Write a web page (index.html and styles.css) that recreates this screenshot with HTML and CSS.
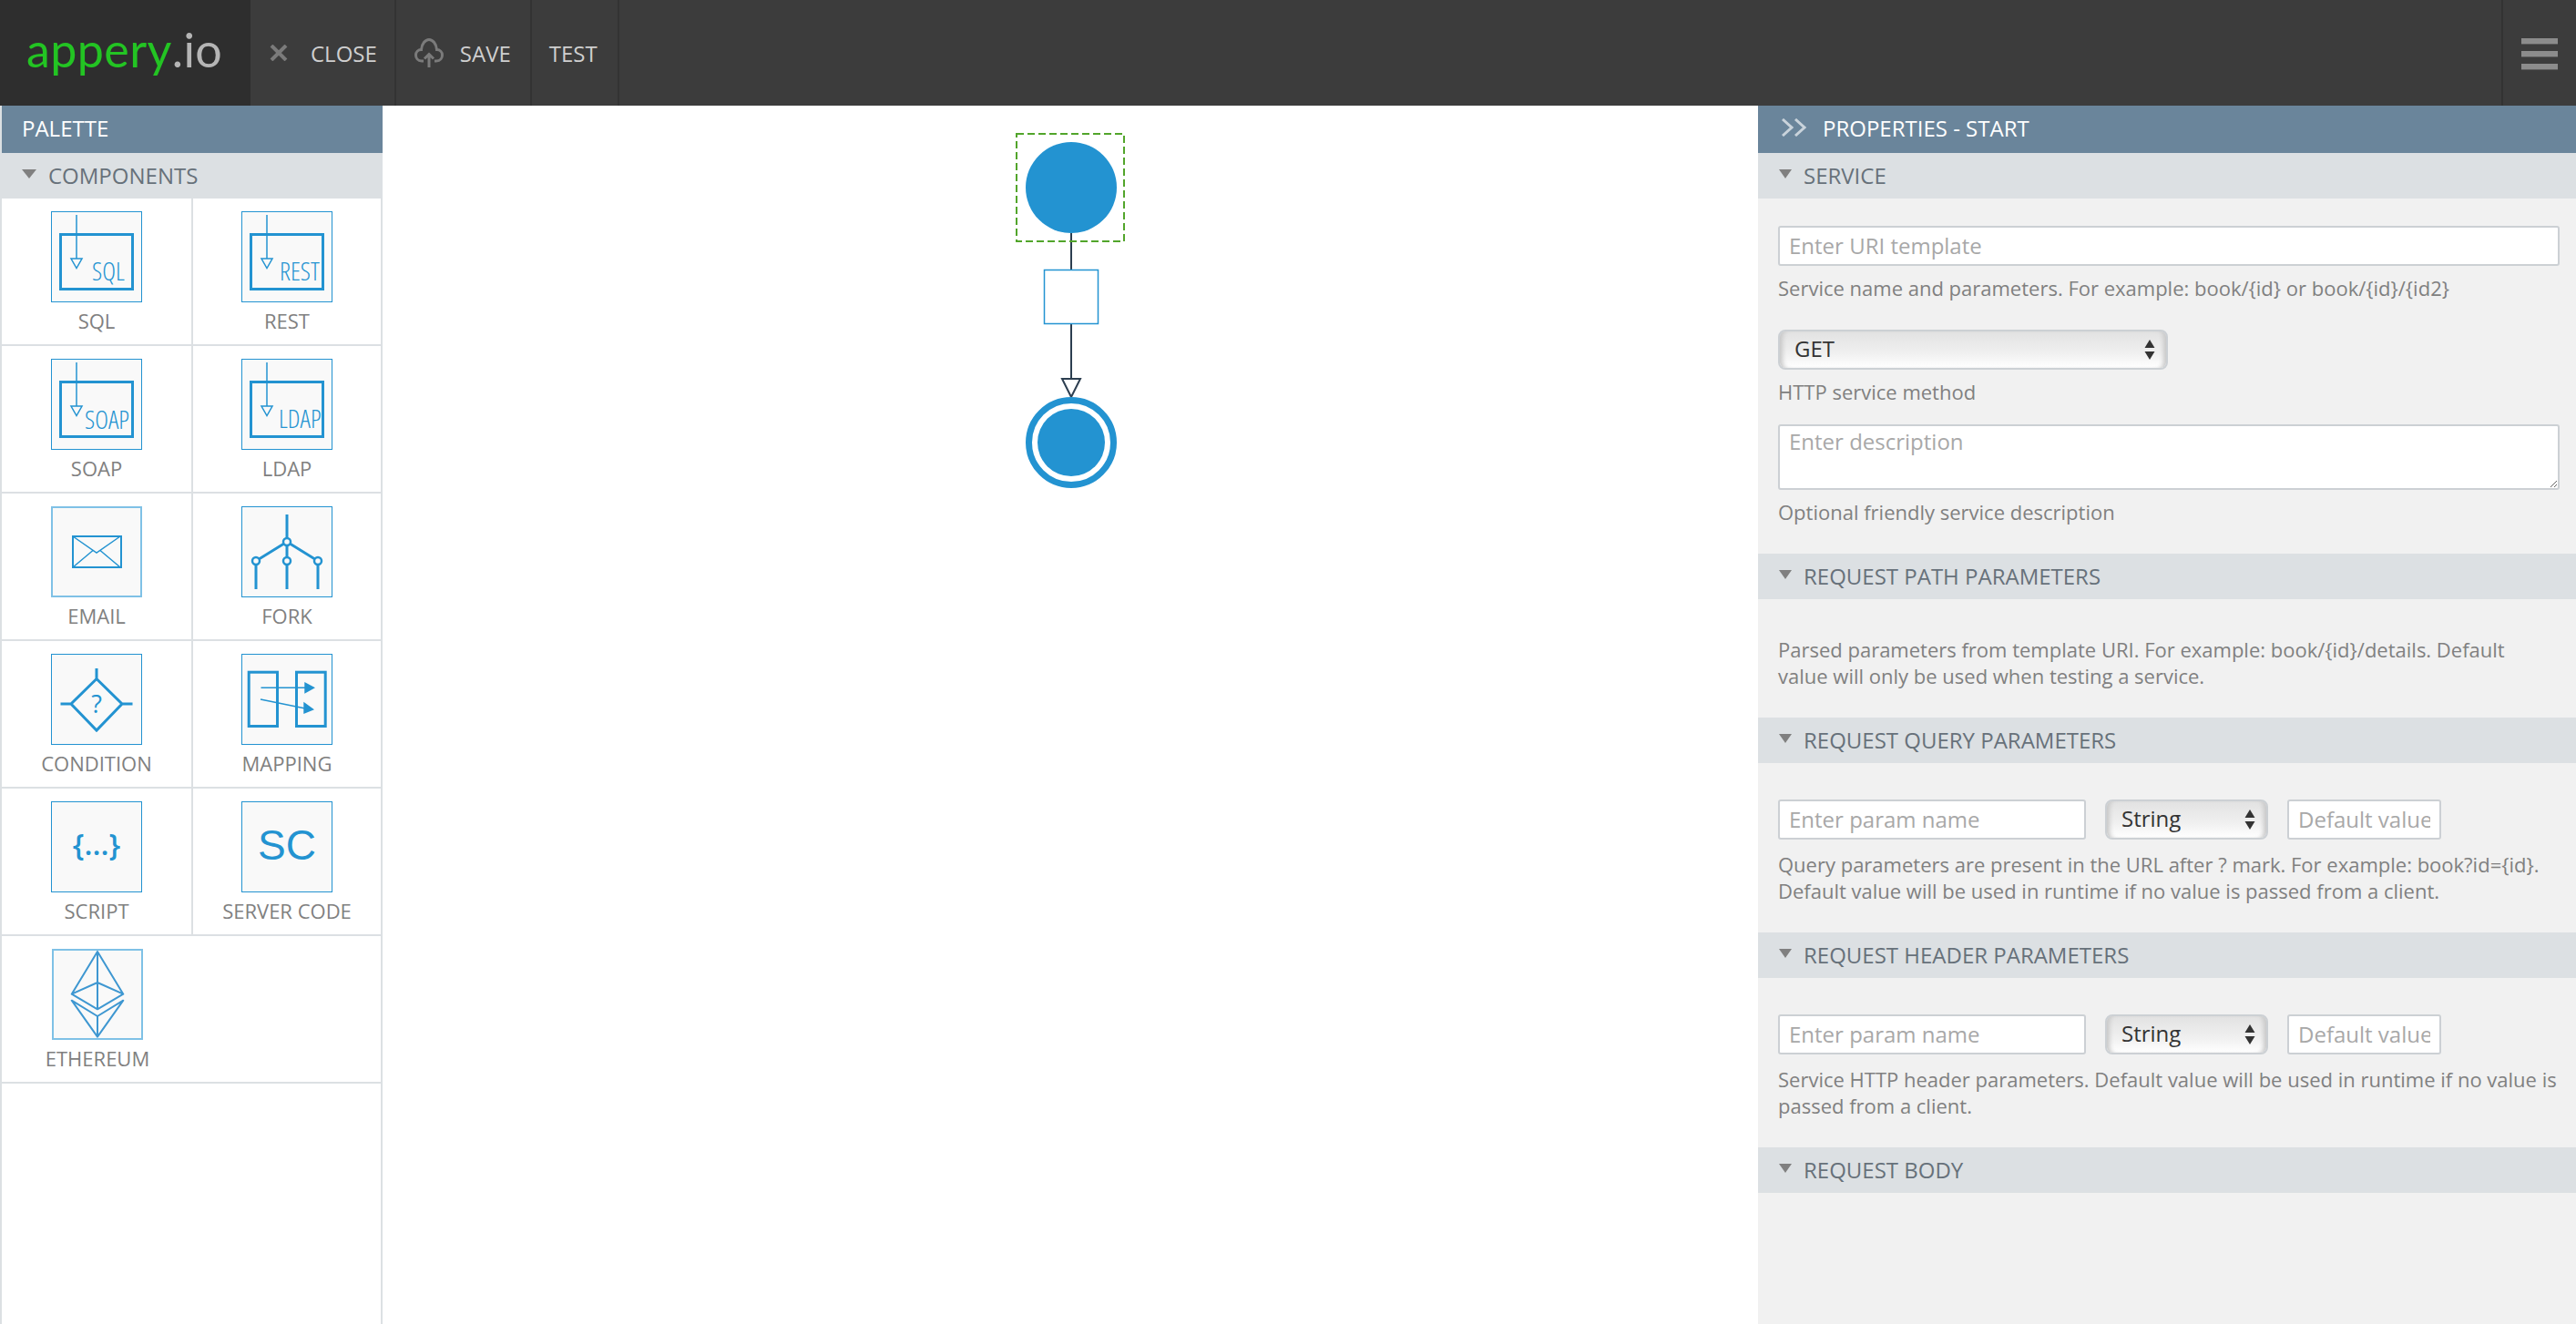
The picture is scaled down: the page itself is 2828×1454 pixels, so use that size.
FILE: index.html
```html
<!DOCTYPE html>
<html lang="en">
<head>
<meta charset="utf-8">
<title>Appery.io service editor</title>
<link rel="stylesheet" href="styles.css">
</head>
<body>
<header class="topbar">
  <div class="logo"><span class="logo-green">appery</span><span class="logo-grey">.io</span></div>
  <div class="tool tool-close">
    <svg class="tool-x" width="20" height="18" viewBox="0 0 20 18"><path d="M2 1 L18 17 M18 1 L2 17"/></svg>
    <span>CLOSE</span>
  </div>
  <div class="tool tool-save">
    <svg class="tool-cloud" width="32" height="32" viewBox="0 0 32 32"><path d="M10 25 H8 C3.500 25 1.500 21.500 1.500 18.500 C1.500 15 4 12.500 7.500 12.500 C8 6 12 1.500 16 1.500 C20 1.500 24 6 24.500 12.500 C28 12.500 30.500 15 30.500 18.500 C30.500 21.500 28.500 25 24 25 H22"/><path d="M16 32 V18 M11 22.500 L16 17.500 L21 22.500"/></svg>
    <span>SAVE</span>
  </div>
  <div class="tool tool-test"><span>TEST</span></div>
  <div class="top-spacer"></div>
  <div class="menu"><span class="bar"></span><span class="bar"></span><span class="bar"></span></div>
</header>

<main class="workspace">
  <aside class="palette">
    <div class="panel-title palette-title">PALETTE</div>
    <div class="section-head"><i class="caret"></i>COMPONENTS</div>
    <div class="grid">
      <div class="cell">
        <svg class="icon" viewBox="0 0 98 98"><g transform="translate(-1 -1)"><rect class="s3" x="10.500" y="25.500" width="79" height="60"/><path class="s15" d="M28 4 V52"/><path class="s15 bgf" d="M22 52 H34 L28 62.500 Z"/><text class="ico-cond" x="45" y="76">SQL</text></g></svg>
        <div class="label">SQL</div>
      </div>
      <div class="cell">
        <svg class="icon" viewBox="0 0 98 98"><g transform="translate(-1 -1)"><rect class="s3" x="10.500" y="25.500" width="79" height="60"/><path class="s15" d="M28 4 V52"/><path class="s15 bgf" d="M22 52 H34 L28 62.500 Z"/><text class="ico-cond" x="42" y="76">REST</text></g></svg>
        <div class="label">REST</div>
      </div>
      <div class="cell">
        <svg class="icon" viewBox="0 0 98 98"><g transform="translate(-1 -1)"><rect class="s3" x="10.500" y="25.500" width="79" height="60"/><path class="s15" d="M28 4 V52"/><path class="s15 bgf" d="M22 52 H34 L28 62.500 Z"/><text class="ico-cond" x="37" y="77">SOAP</text></g></svg>
        <div class="label">SOAP</div>
      </div>
      <div class="cell">
        <svg class="icon" viewBox="0 0 98 98"><g transform="translate(-1 -1)"><rect class="s3" x="10.500" y="25.500" width="79" height="60"/><path class="s15" d="M28 4 V52"/><path class="s15 bgf" d="M22 52 H34 L28 62.500 Z"/><text class="ico-cond" x="41" y="76">LDAP</text></g></svg>
        <div class="label">LDAP</div>
      </div>
      <div class="cell">
        <svg class="icon icon-soft" viewBox="0 0 96 96"><g transform="translate(-2 -2)"><rect class="s2" x="24" y="33" width="53" height="34"/><path class="s15" d="M24 33 L50 51 L76 33 M24 67 L46 48.500 M54 48.500 L76 67"/></g></svg>
        <div class="label">EMAIL</div>
      </div>
      <div class="cell">
        <svg class="icon" viewBox="0 0 98 98"><g transform="translate(-1 -1)"><path class="s3" d="M50 9 V91 M50 39 L16 60 V91 M50 39 L84 60 V91"/><circle class="s25 bgf" cx="50" cy="39" r="4"/><circle class="s25 bgf" cx="50" cy="60" r="4"/><circle class="s25 bgf" cx="16" cy="60" r="4"/><circle class="s25 bgf" cx="84" cy="60" r="4"/></g></svg>
        <div class="label">FORK</div>
      </div>
      <div class="cell">
        <svg class="icon" viewBox="0 0 98 98"><g transform="translate(-1 -1)"><path class="s3" d="M50 16 V27.500 M10.500 55 H22 M78 55 H89.500 M50 27.500 L78 55 L50 84 L22 55 Z"/><text class="ico-q" x="50" y="65">?</text></g></svg>
        <div class="label">CONDITION</div>
      </div>
      <div class="cell">
        <svg class="icon" viewBox="0 0 98 98"><g transform="translate(-1 -1)"><rect class="s3" x="8.200" y="20.200" width="31.300" height="59.300"/><rect class="s3" x="60.500" y="20.200" width="31.700" height="59.300"/><path class="s15" d="M21.500 37.300 H70 M21 50 L70 60"/><path class="f" d="M69.300 31 L81 37.300 L69.300 43.700 Z M68.300 52.700 L80 61.300 L68.300 66 Z"/></g></svg>
        <div class="label">MAPPING</div>
      </div>
      <div class="cell">
        <svg class="icon" viewBox="0 0 98 98"><text class="ico-braces" x="49" y="58">{...}</text></svg>
        <div class="label">SCRIPT</div>
      </div>
      <div class="cell">
        <svg class="icon" viewBox="0 0 98 98"><text class="ico-sc" x="49" y="63">SC</text></svg>
        <div class="label">SERVER CODE</div>
      </div>
      <div class="cell cell-last">
        <svg class="icon icon-soft" viewBox="0 0 96 96"><g transform="translate(-2 -2)"><path class="eth" d="M50 3 L78.300 49.700 L50 66.300 L21.700 49.700 Z M21.700 49.700 L50 37 L78.300 49.700 M50 3 V66.300 M21.700 56.700 L50 74 L78.300 56.700 L50 96.700 Z M50 74 V96.700"/></g></svg>
        <div class="label">ETHEREUM</div>
      </div>
    </div>
  </aside>

  <section class="canvas">
    <svg class="diagram" width="1510" height="1338" viewBox="420 116 1510 1338">
      <path class="edge" d="M1176 256 V296 M1176 356 V416"/>
      <path class="edge edge-arrow" d="M1166 416 H1186 L1176 436 Z"/>
      <rect class="select-box" x="1116" y="147" width="118" height="118"/>
      <circle class="node" cx="1176" cy="206" r="50"/>
      <rect class="task" x="1146.500" y="296.500" width="59" height="59"/>
      <circle class="node-ring" cx="1176" cy="486" r="46.500"/>
      <circle class="node" cx="1176" cy="486" r="37"/>
    </svg>
  </section>

  <aside class="props">
    <div class="panel-title props-title">
      <svg class="chev" width="28" height="20" viewBox="0 0 28 20"><path d="M1 1 L11 10 L1 19 M15 1 L25 10 L15 19"/></svg>
      PROPERTIES - START
    </div>

    <div class="section-head"><i class="caret"></i>SERVICE</div>
    <div class="body body-service">
      <input class="field field-full" type="text" placeholder="Enter URI template">
      <p class="hint">Service name and parameters. For example: book/{id} or book/{id}/{id2}</p>
      <div class="select select-method"><span>GET</span><svg class="updown" width="12" height="22" viewBox="0 0 12 22"><path d="M6 0 L11.500 9 H0.500 Z M0.500 13 H11.500 L6 22 Z"/></svg></div>
      <p class="hint">HTTP service method</p>
      <textarea class="field field-area" placeholder="Enter description"></textarea>
      <p class="hint">Optional friendly service description</p>
    </div>

    <div class="section-head"><i class="caret"></i>REQUEST PATH PARAMETERS</div>
    <div class="body body-path">
      <p class="hint hint-flush">Parsed parameters from template URI. For example: book/{id}/details. Default value will only be used when testing a service.</p>
    </div>

    <div class="section-head"><i class="caret"></i>REQUEST QUERY PARAMETERS</div>
    <div class="body body-params">
      <div class="param-row">
        <input class="field field-name" type="text" placeholder="Enter param name">
        <div class="select select-type"><span>String</span><svg class="updown" width="12" height="22" viewBox="0 0 12 22"><path d="M6 0 L11.500 9 H0.500 Z M0.500 13 H11.500 L6 22 Z"/></svg></div>
        <input class="field field-default" type="text" placeholder="Default value">
      </div>
      <p class="hint hint-row">Query parameters are present in the URL after ? mark. For example: book?id={id}. Default value will be used in runtime if no value is passed from a client.</p>
    </div>

    <div class="section-head"><i class="caret"></i>REQUEST HEADER PARAMETERS</div>
    <div class="body body-params">
      <div class="param-row">
        <input class="field field-name" type="text" placeholder="Enter param name">
        <div class="select select-type"><span>String</span><svg class="updown" width="12" height="22" viewBox="0 0 12 22"><path d="M6 0 L11.500 9 H0.500 Z M0.500 13 H11.500 L6 22 Z"/></svg></div>
        <input class="field field-default" type="text" placeholder="Default value">
      </div>
      <p class="hint hint-row">Service HTTP header parameters. Default value will be used in runtime if no value is passed from a client.</p>
    </div>

    <div class="section-head"><i class="caret"></i>REQUEST BODY</div>
  </aside>
</main>
</body>
</html>
```
FILE: styles.css
```css
* { box-sizing: border-box; }
html, body { margin: 0; height: 100%; }
body {
  display: flex;
  flex-direction: column;
  height: 100vh;
  overflow: hidden;
  background: #fff;
  font-family: "Open Sans", "Liberation Sans", sans-serif;
  font-size: 22px;
  color: #808080;
}

/* top bar */
.topbar {
  display: flex;
  flex: 0 0 116px;
  align-items: stretch;
  background: #3c3c3c;
  color: #cfcfcf;
  font-size: 24px;
}
.logo {
  display: flex;
  flex: 0 0 275px;
  align-items: center;
  padding: 0 0 8px 29px;
  background: #2e2e2e;
  font-family: Lato, sans-serif;
  font-weight: 400;
  font-size: 52px;
  letter-spacing: 0.4px;
  line-height: 1;
  white-space: nowrap;
}
.logo-green { color: #23c423; }
.logo-grey { color: #b5b5b5; }
.tool {
  display: flex;
  align-items: center;
  border-right: 2px solid #333;
  white-space: nowrap;
}
.tool-close { gap: 25px; padding: 0 19px 0 21px; }
.tool-save { gap: 18px; padding: 0 21px 0 20px; }
.tool-test { padding: 0 22px 0 19px; }
.tool-x path { fill: none; stroke: #7b7b7b; stroke-width: 4; }
.tool-cloud path { fill: none; stroke: #7b7b7b; stroke-width: 3; }
.top-spacer { flex: 1; }
.menu {
  display: flex;
  flex: 0 0 82px;
  flex-direction: column;
  gap: 8px;
  padding: 42px 20px 0;
  border-left: 2px solid #333;
}
.bar {
  display: block;
  width: 40px;
  height: 6px;
  background: #8c8c8c;
  box-shadow: 0 1px 0 #5c5c5c;
}

/* columns */
.workspace { display: flex; flex: 1; min-height: 0; }
.palette {
  flex: 0 0 420px;
  display: flex;
  flex-direction: column;
  border-left: 2px solid #dce0e3;
  border-right: 2px solid #dce0e3;
}
.canvas { flex: 1; min-width: 0; background: #fff; }
.diagram { display: block; }
.props { flex: 0 0 898px; background: #f1f1f1; }

.panel-title {
  display: flex;
  flex: 0 0 52px;
  align-items: center;
  height: 52px;
  padding-bottom: 4px;
  background: #6a859b;
  color: #fff;
  font-size: 24px;
}
.palette-title { margin-right: -2px; padding-left: 22px; }
.props-title { gap: 17px; padding-left: 26px; }
.chev path { fill: none; stroke: #c9d3db; stroke-width: 3; }

.section-head {
  display: flex;
  flex: 0 0 50px;
  align-items: center;
  height: 50px;
  padding-bottom: 2px;
  background: #dce0e3;
  color: #67717a;
  font-size: 24px;
}
.palette .section-head { margin-right: -2px; padding-left: 22px; }
.props .section-head { padding-left: 23px; }
.caret {
  flex: 0 0 auto;
  width: 0;
  height: 0;
  margin: -3px 13px 0 0;
  border-left: 8px solid transparent;
  border-right: 8px solid transparent;
  border-top: 10px solid #808080;
}
.props .caret {
  margin-right: 13px;
  border-left-width: 7px;
  border-right-width: 7px;
}

/* palette grid */
.grid { display: grid; grid-template-columns: 210px 206px; }
.cell {
  display: flex;
  flex-direction: column;
  align-items: center;
  height: 162px;
  padding-top: 14px;
  border-bottom: 2px solid #dce0e3;
}
.cell:nth-child(odd) { border-right: 2px solid #dce0e3; }
.cell-last { grid-column: 1 / -1; padding-right: 206px; }
.cell.cell-last { border-right: 0; }
.label { margin-top: 2px; line-height: 36px; color: #808080; white-space: nowrap; }

.icon {
  display: block;
  flex: 0 0 100px;
  width: 100px;
  height: 100px;
  border: 1px solid #2393d1;
  background: #f9f9f9;
}
.icon-soft { border: 2px solid #7fc1e6; }
.s3, .s2, .s15, .s25, .eth { fill: none; stroke: #2393d1; }
.s3 { stroke-width: 3; }
.s2 { stroke-width: 2; }
.s15 { stroke-width: 1.500; }
.s25 { stroke-width: 2.500; }
.bgf { fill: #f9f9f9; }
.f { fill: #2393d1; }
.eth { stroke: #3e97d1; stroke-width: 2; stroke-linejoin: round; }
.ico-cond {
  font-family: "Open Sans", sans-serif;
  font-size: 28px;
  font-weight: 300;
  font-stretch: 75%;
  fill: #2393d1;
}
.ico-q { font-family: "Open Sans", sans-serif; font-size: 27px; fill: #2393d1; text-anchor: middle; }
.ico-braces {
  font-family: "Open Sans", sans-serif;
  font-size: 33px;
  font-weight: 600;
  fill: #2393d1;
  text-anchor: middle;
}
.ico-sc {
  font-family: "Liberation Sans", sans-serif;
  font-size: 46px;
  fill: #2393d1;
  text-anchor: middle;
}

/* diagram */
.edge { fill: none; stroke: #2c3e50; stroke-width: 2; }
.edge-arrow { fill: #fff; }
.select-box { fill: none; stroke: #52a52b; stroke-width: 2; stroke-dasharray: 8 4; }
.node { fill: #2393d1; }
.node-ring { fill: #fff; stroke: #2393d1; stroke-width: 7; }
.task { fill: #fff; stroke: #2393d1; stroke-width: 1.500; }

/* properties */
.body { padding-left: 22px; padding-right: 18px; }
.body-service { height: 390px; padding-top: 30px; }
.body-path { height: 130px; padding-top: 41px; }
.body-params { height: 186px; padding-top: 40px; }
.hint { margin: 10px 0 0; padding-bottom: 2px; line-height: 29px; color: #808080; }
.hint-flush { margin-top: 0; }
.hint-row { margin-top: 13px; }
.field {
  display: block;
  height: 44px;
  padding: 0 10px 2px;
  border: 2px solid #ccd0d4;
  border-radius: 3px;
  background: #fff;
  color: #555;
  font: inherit;
  font-size: 24px;
  outline: 0;
}
.field::placeholder { color: #a8a8a8; opacity: 1; }
.field-full { width: 858px; }
.field-area { width: 858px; height: 72px; margin-top: 19px; padding: 2px 10px; line-height: 30px; }
.field-name { width: 338px; }
.field-default { width: 169px; }
.param-row { display: flex; gap: 21px; }
.select {
  display: flex;
  align-items: center;
  justify-content: space-between;
  height: 44px;
  padding: 0 12px 4px 16px;
  border: 2px solid #ccd0d4;
  border-radius: 8px;
  background: linear-gradient(#e2e2e2, #f0f0f0 60%, #fff);
  box-shadow: inset 6px 0 5px -3px #c8c8c8, inset -6px 0 5px -3px #c8c8c8;
  color: #333;
  font-size: 24px;
}
.select-method { width: 428px; margin-top: 29px; }
.select-type { width: 179px; }
.updown { margin-top: 4px; }
.updown path { fill: #333; }
```
